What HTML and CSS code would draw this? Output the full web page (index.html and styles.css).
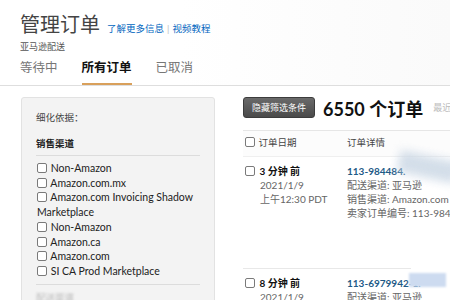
FILE: index.html
```html
<!DOCTYPE html>
<html lang="zh-CN">
<head>
    <meta charset="UTF-8">
    <title>管理订单</title>
    <link rel="stylesheet" href="styles.css">
</head>
<body>
    <div class="page">
        <!-- Header -->
        <header class="page-header">
            <div class="title-row">
                <h1>管理订单</h1>
                <a class="help-link" href="#">了解更多信息</a>
                <span class="sep">|</span>
                <a class="help-link" href="#">视频教程</a>
            </div>
            <div class="subtitle">亚马逊配送</div>
            <nav class="tabs">
                <a class="tab" href="#">等待中</a>
                <a class="tab active" href="#">所有订单</a>
                <a class="tab" href="#">已取消</a>
            </nav>
        </header>

        <div class="layout">
            <!-- Filters -->
            <aside class="filters">
                <div class="filters-label">细化依据：</div>
                <div class="filters-title">销售渠道</div>
                <ul class="channel-list">
                    <li><label><input type="checkbox" class="cb"> Non-Amazon</label></li>
                    <li><label><input type="checkbox" class="cb"> Amazon.com.mx</label></li>
                    <li><label><input type="checkbox" class="cb"> Amazon.com Invoicing Shadow Marketplace</label></li>
                    <li><label><input type="checkbox" class="cb"> Non-Amazon</label></li>
                    <li><label><input type="checkbox" class="cb"> Amazon.ca</label></li>
                    <li><label><input type="checkbox" class="cb"> Amazon.com</label></li>
                    <li><label><input type="checkbox" class="cb"> SI CA Prod Marketplace</label></li>
                </ul>
                <div class="filters-title faded">配送渠道</div>
            </aside>

            <!-- Orders -->
            <main class="orders">
                <div class="toolbar">
                    <button class="btn-dark">隐藏筛选条件</button>
                    <span class="order-count">6550 个订单</span>
                    <span class="order-range">最近</span>
                </div>
                <div class="order-table">
                    <div class="order-row head">
                        <div class="col-date"><input type="checkbox" class="cb"> 订单日期</div>
                        <div class="col-detail">订单详情</div>
                    </div>
                    <div class="order-row">
                        <div class="col-date">
                            <div class="ago"><input type="checkbox" class="cb"> 3 分钟 前</div>
                            <div class="muted">2021/1/9</div>
                            <div class="muted">上午12:30 PDT</div>
                        </div>
                        <div class="col-detail">
                            <a class="order-id" href="#">113-984484.</a>
                            <div class="muted">配送渠道: 亚马逊</div>
                            <div class="muted">销售渠道: Amazon.com</div>
                            <div class="muted">卖家订单编号: 113-98448-</div>
                        </div>
                    </div>
                    <div class="order-row">
                        <div class="col-date">
                            <div class="ago"><input type="checkbox" class="cb"> 8 分钟 前</div>
                            <div class="muted">2021/1/9</div>
                        </div>
                        <div class="col-detail">
                            <a class="order-id" href="#">113-6979942-1.</a>
                            <div class="muted">配送渠道: 亚马逊</div>
                        </div>
                    </div>
                </div>
            </main>
        </div>

        <!-- blurred bits over the screenshot -->
        <div class="smudge"></div>
        <div class="mask"></div>
    </div>
</body>
</html>
```

FILE: styles.css
```css
:root {
    --text-primary: #222;
    --text-muted: #666;
    --link: #0066c0;
    --order-link: #1e5b87;
    --border-color: #dedede;
    --panel-bg: #f3f3f3;
    --tab-active: #d9a05b;
}

* {
    box-sizing: border-box;
    margin: 0;
    padding: 0;
}

body {
    font-family: 'Lato', 'Noto Sans CJK SC', sans-serif;
    color: var(--text-primary);
    background-color: #fff;
    width: 450px;
    height: 300px;
    overflow: hidden;
}

a {
    text-decoration: none;
}

.page {
    position: relative;
    height: 300px;
    overflow: hidden;
}

/* Header */
.page-header {
    padding-top: 12px;
    border-bottom: 1px solid var(--border-color);
    background: linear-gradient(to right, #fff 40%, #fafafa);
}

.title-row {
    display: flex;
    align-items: baseline;
    padding-left: 20px;
}

.title-row h1 {
    font-size: 20px;
    line-height: 24px;
    font-weight: normal;
    color: #444;
    margin-right: 7px;
}

.help-link {
    font-size: 9.5px;
    color: var(--link);
}

.sep {
    font-size: 9.5px;
    color: #bbb;
    margin: 0 3px;
}

.subtitle {
    padding-left: 20px;
    margin-top: 5px;
    font-size: 9px;
    line-height: 12px;
    color: #555;
}

.tabs {
    display: flex;
    gap: 24px;
    padding-left: 20px;
    margin-top: 7px;
}

.tab {
    font-size: 12.5px;
    line-height: 16px;
    padding-bottom: 7px;
    color: #777;
    border-bottom: 2px solid transparent;
}

.tab.active {
    color: #111;
    font-weight: bold;
    border-bottom-color: var(--tab-active);
}

/* Layout */
.layout {
    display: flex;
    gap: 28px;
    margin-top: 11px;
    padding-left: 21px;
}

/* Filters */
.filters {
    width: 194px;
    flex-shrink: 0;
    height: 260px;
    background-color: var(--panel-bg);
    border: 1px solid #e2e2e2;
    border-radius: 3px;
    padding: 14px 14px 0 14px;
}

.filters-label {
    font-size: 9.5px;
    line-height: 12px;
    color: #444;
}

.filters-title {
    font-size: 9.5px;
    line-height: 12px;
    font-weight: bold;
    color: #222;
    margin-top: 14px;
    padding-bottom: 5px;
    border-bottom: 1px solid #dcdcdc;
}

.filters-title.faded {
    margin-top: 7px;
    border-bottom: none;
    color: #ccc;
    filter: blur(1px);
}

.channel-list {
    list-style: none;
    padding: 5px 0 5px 1px;
    border-bottom: 1px solid #dcdcdc;
}

.channel-list li {
    font-size: 10.5px;
    line-height: 14.7px;
    color: #222;
}

.cb {
    appearance: none;
    display: inline-block;
    width: 10px;
    height: 10px;
    border: 1px solid #7a7a7a;
    border-radius: 2px;
    background-color: #fff;
    vertical-align: -1px;
    margin-right: 1px;
}

/* Orders */
.orders {
    flex: 1;
    min-width: 300px;
}

.toolbar {
    display: flex;
    align-items: center;
    height: 21px;
}

.btn-dark {
    height: 21px;
    padding: 0 8px;
    font-family: inherit;
    font-size: 9px;
    color: #fff;
    background: linear-gradient(#6a6a6a, #4a4a4a);
    border: 1px solid #3c3c3c;
    border-radius: 3px;
}

.order-count {
    font-size: 18px;
    font-weight: bold;
    color: #111;
    margin-left: 8px;
}

.order-range {
    font-size: 9px;
    color: #bbb;
    margin-left: 10px;
}

.order-table {
    margin-top: 12px;
    border-top: 1px solid #e6e6e6;
}

.order-row {
    display: flex;
    font-size: 10px;
    line-height: 14px;
    height: 112px;
    padding-top: 7px;
    border-bottom: 1px solid #e8e8e8;
    width: 168px;
    white-space: nowrap;
}

.order-row.head {
    height: 26px;
    padding-top: 5px;
    width: auto;
    font-size: 9.5px;
    color: #444;
    background-color: #fcfcfc;
    border-bottom: 1px solid #efefef;
}

.col-date {
    width: 104px;
    flex-shrink: 0;
    padding-left: 2px;
}

.col-date .muted {
    padding-left: 15px;
}

.col-detail {
    flex-shrink: 0;
}

.ago {
    font-weight: bold;
    color: #111;
}

.ago .cb {
    margin-right: 2px;
}

.muted {
    color: var(--text-muted);
}

.order-id {
    display: block;
    color: var(--order-link);
    font-weight: bold;
}

/* Blurred overlays */
.smudge {
    position: absolute;
    left: 398px;
    top: 156px;
    width: 60px;
    height: 22px;
    background-color: #c9d6e4;
    filter: blur(5px);
    transform: rotate(12deg);
    opacity: 0.8;
}

.mask {
    position: absolute;
    left: 409px;
    top: 273px;
    width: 37px;
    height: 14px;
    background-color: #cddbf0;
    filter: blur(1px);
}
```
